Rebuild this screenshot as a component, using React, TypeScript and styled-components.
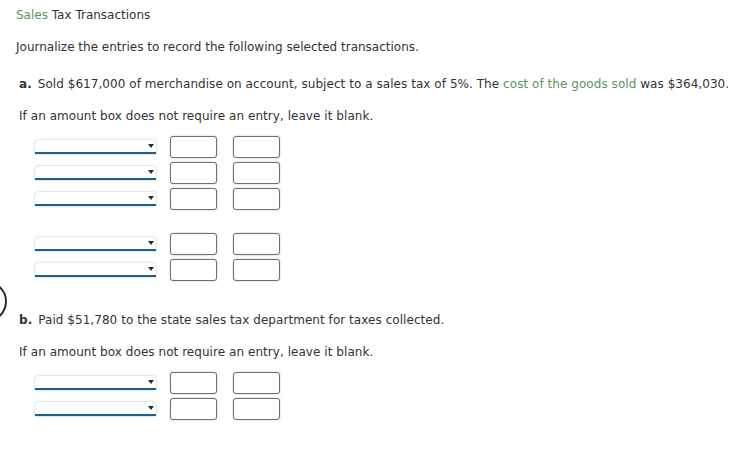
import React from 'react';
import styled, {createGlobalStyle} from 'styled-components';

const GlobalStyle = createGlobalStyle`
  html, body {
    margin: 0;
    padding: 0;
    background: #fff;
  }
  body {
    font-family: "DejaVu Sans", Verdana, sans-serif;
    font-size: 12px;
    color: #333;
    width: 743px;
    height: 450px;
    overflow: hidden;
  }
`;

const Page = styled.div`
  position: relative;
  padding: 7px 0 0 16px;
`;

const Heading = styled.div`
  line-height: 16px;
`;

const Green = styled.span`
  color: #5a9460;
`;

const Intro = styled.p`
  margin: 16px 0 0;
  line-height: 16px;
`;

const Part = styled.div`
  padding-left: 3px;
`;

const Prompt = styled.p<{top: number}>`
  margin: ${p => p.top}px 0 0;
  line-height: 16px;
  letter-spacing: 0.05px;
`;

const Label = styled.b`
  margin-right: 6px;
`;

const Journal = styled.div<{top: number}>`
  display: flex;
  flex-direction: column;
  gap: 4px;
  margin: ${p => p.top}px 0 0 16px;
`;

const Row = styled.div`
  display: flex;
  align-items: center;
  height: 22px;
`;

const Select = styled.div`
  position: relative;
  box-sizing: border-box;
  width: 121px;
  height: 14px;
  margin-right: 14px;
  background: #fff;
  border-radius: 4px 4px 0 0;
  box-shadow: 0 0 2px rgba(0, 0, 0, 0.35);
  border-bottom: 2px solid #1f5f8d;
`;

const Caret = styled.span`
  position: absolute;
  right: 2px;
  top: 4px;
  width: 0;
  height: 0;
  border-left: 3.5px solid transparent;
  border-right: 3.5px solid transparent;
  border-top: 4px solid #2b2b2b;
`;

const Amount = styled.div`
  box-sizing: border-box;
  width: 47px;
  height: 22px;
  margin-right: 16px;
  border: 1px solid #707070;
  border-radius: 3px;
  box-shadow: 0 0 2px rgba(0, 0, 0, 0.25);
  background: #fff;
`;

// radio ring peeking in from the left edge
const Ring = styled.div`
  position: absolute;
  left: -34px;
  top: 281px;
  box-sizing: border-box;
  width: 41px;
  height: 41px;
  border: 2.5px solid #2a2a2a;
  border-radius: 50%;
`;

const Spacer = styled.div`
  height: 15px;
`;

const JournalRows = ({count}: {count: number}) => (
  <>
    {Array.from({length: count}).map((_, i) => (
      <Row key={i}>
        <Select>
          <Caret />
        </Select>
        <Amount />
        <Amount />
      </Row>
    ))}
  </>
);

const App = () => (
  <Page>
    <GlobalStyle />
    <Heading>
      <Green>Sales</Green> Tax Transactions
    </Heading>
    <Intro>Journalize the entries to record the following selected transactions.</Intro>
    <Part>
      <Prompt top={21}>
        <Label>a.</Label>Sold $617,000 of merchandise on account, subject to a sales tax of 5%. The{' '}
        <Green>cost of the goods sold</Green> was $364,030.
      </Prompt>
      <Prompt top={16}>If an amount box does not require an entry, leave it blank.</Prompt>
      <Journal top={12}>
        <JournalRows count={3} />
        <Spacer />
        <JournalRows count={2} />
      </Journal>
      <Prompt top={31}>
        <Label>b.</Label>Paid $51,780 to the state sales tax department for taxes collected.
      </Prompt>
      <Prompt top={16}>If an amount box does not require an entry, leave it blank.</Prompt>
      <Journal top={12}>
        <JournalRows count={2} />
      </Journal>
    </Part>
    <Ring />
  </Page>
);

export default App;
